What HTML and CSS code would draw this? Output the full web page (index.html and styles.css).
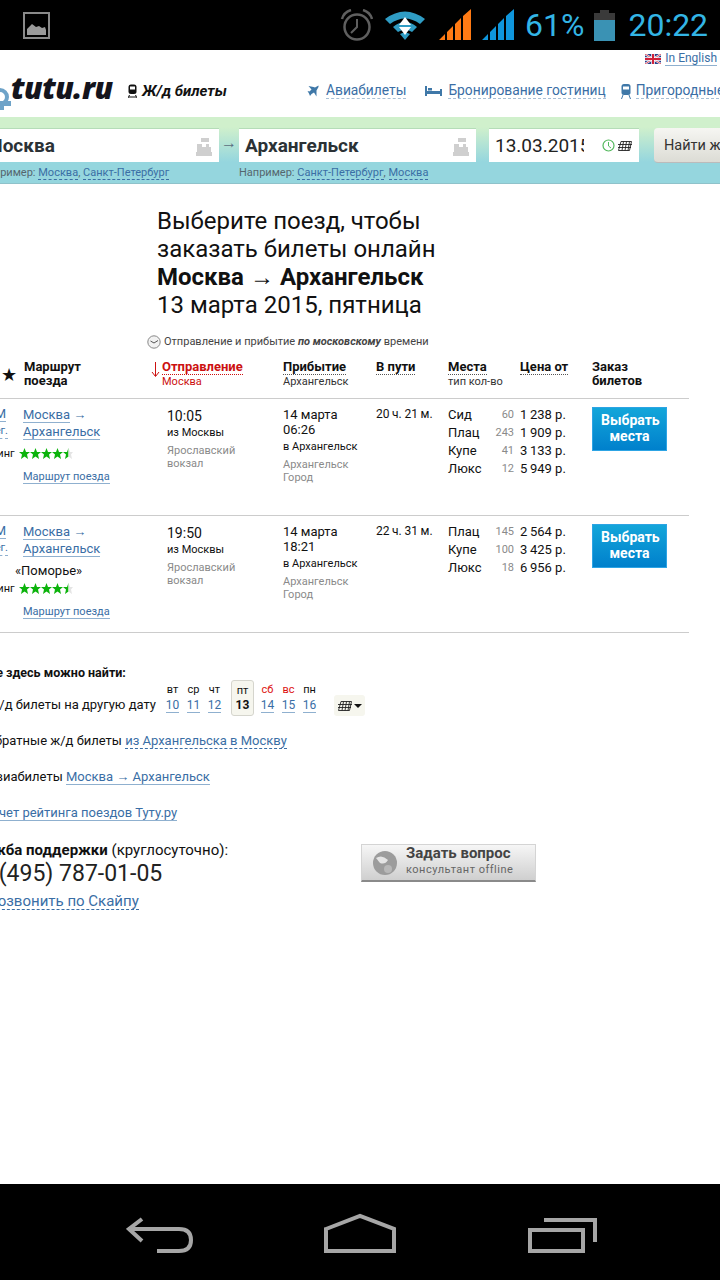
FILE: index.html
```html
<!DOCTYPE html>
<html lang="ru">
<head>
    <meta charset="UTF-8">
    <meta name="viewport" content="width=device-width, initial-scale=1.0">
    <title>Выбор поезда</title>
    <link rel="stylesheet" href="styles.css">
</head>
<body>
    <!-- Android status bar -->
    <div class="status-bar">
        <svg class="st-picture" width="27" height="27" viewBox="0 0 27 27">
            <rect x="1" y="1" width="25" height="25" fill="none" stroke="#8a8a8a" stroke-width="2"/>
            <path d="M4 23V17L9 12L13 15L16 14L19 16L22 15L23 18V23Z" fill="#9a9a9a"/>
        </svg>
        <svg class="st-alarm" width="33" height="32" viewBox="0 0 33 32">
            <circle cx="17" cy="18" r="12.5" fill="none" stroke="#5f5f5f" stroke-width="2.5"/>
            <path d="M17 10V18L11 24" fill="none" stroke="#5f5f5f" stroke-width="2"/>
            <path d="M2 10Q4 3 11 1" fill="none" stroke="#5f5f5f" stroke-width="2.5"/>
            <path d="M23 1Q30 3 32 10" fill="none" stroke="#5f5f5f" stroke-width="2.5"/>
        </svg>
        <svg class="st-wifi" width="40" height="31" viewBox="0 0 40 31">
            <path d="M0 9Q20 -6 40 9L35 14Q20 3 5 14Z" fill="#2f9cc4"/>
            <path d="M8 17Q20 7 32 17L27 22Q20 17 13 22Z" fill="#2f9cc4"/>
            <path d="M15 24Q20 21 25 24L20 30Z" fill="#2f9cc4"/>
            <path d="M20 7L26 15H14Z" fill="#fff"/>
            <path d="M20 25L26 17H14Z" fill="#fff"/>
        </svg>
        <svg class="st-signal" width="33" height="32" viewBox="0 0 33 32">
            <path d="M0 31L6 25V31ZM8 23L14 17V31H8ZM16 15L22 9V31H16ZM24 7L32 0V31H24Z" fill="#ff7a14"/>
        </svg>
        <svg class="st-signal-2" width="33" height="32" viewBox="0 0 33 32">
            <path d="M0 31L6 25V31ZM8 23L14 17V31H8ZM16 15L22 9V31H16ZM24 7L32 0V31H24Z" fill="#0f96dc"/>
        </svg>
        <span class="st-text st-percent">61%</span>
        <svg class="st-battery" width="21" height="31" viewBox="0 0 21 31">
            <path d="M6 0H15V3H21V31H0V3H6Z" fill="#3a3a3a"/>
            <rect y="10" width="21" height="21" fill="#3a92b4"/>
        </svg>
        <span class="st-text st-time">20:22</span>
    </div>

    <div class="screen">
        <div class="site">
            <div class="lang-row">
                <svg width="16" height="10" viewBox="0 0 16 10">
                    <rect width="16" height="10" fill="#27408b"/>
                    <path d="M0 0L16 10M16 0L0 10" stroke="#fff" stroke-width="2"/>
                    <path d="M0 0L16 10M16 0L0 10" stroke="#d0213a" stroke-width="0.8"/>
                    <path d="M8 0V10M0 5H16" stroke="#fff" stroke-width="3.5"/>
                    <path d="M8 0V10M0 5H16" stroke="#d0213a" stroke-width="2"/>
                </svg>
                <a class="lang-link" href="#">In English</a>
            </div>

            <div class="top-row">
                <svg class="logo-mark" width="12" height="24" viewBox="0 0 12 24">
                    <circle cx="0" cy="9" r="7" fill="none" stroke="#6ea3c8" stroke-width="4"/>
                    <path d="M0 13H11V18H0Z" fill="#6ea3c8"/>
                    <path d="M0 15H4V22H0Z" fill="#6ea3c8"/>
                </svg>
                <span class="logo">tutu.ru</span>
                <svg class="train-icon" width="9" height="14" viewBox="0 0 9 14">
                    <rect x="0.5" y="0.5" width="8" height="9.5" rx="2.5" fill="#111"/>
                    <rect x="2" y="2.5" width="5" height="3" fill="#fff"/>
                    <path d="M1.5 11L0 14M7.5 11L9 14M1 13H8" stroke="#111" fill="none"/>
                </svg>
                <span class="section-name">Ж/д билеты</span>
                <svg class="nav-plane" width="12" height="12" viewBox="0 0 12 12">
                    <path d="M11.5 0.5L8 2.5L6.5 2L1.5 1L4.5 4.5L2.5 6.5L0.5 6L2 8.5L3 11L4.5 9L7 7.5L9.5 11.5L9.5 5.5L11.5 2Z" fill="#3f78a8"/>
                </svg>
                <a class="nav-link nav-avia" href="#">Авиабилеты</a>
                <svg class="nav-bed" width="17" height="10" viewBox="0 0 17 10">
                    <path d="M0 0H2V5H15V3H17V10H15V8H2V10H0Z" fill="#3f78a8"/>
                    <rect x="3" y="2" width="4" height="2.5" fill="#3f78a8"/>
                </svg>
                <a class="nav-link nav-hotel" href="#">Бронирование гостиниц</a>
                <svg class="nav-train" width="10" height="16" viewBox="0 0 10 16">
                    <rect x="0.5" y="1" width="9" height="11" rx="2.5" fill="#3f78a8"/>
                    <rect x="2" y="3.5" width="6" height="3" fill="#fff"/>
                    <path d="M2 12L0.5 16M8 12L9.5 16" stroke="#3f78a8" fill="none"/>
                </svg>
                <a class="nav-link" href="#">Пригородные поезда</a>
            </div>

            <div class="search">
                <div class="search-fields">
                    <div class="field">
                        <span class="field-value">Москва</span>
                        <svg class="field-icon" width="16" height="18" viewBox="0 0 16 18">
                            <path d="M5 0H13V4H5ZM1 6H6V9H10V6H13V9H15V14H16V18H0V14H1Z" fill="#cfcfcf"/>
                        </svg>
                    </div>
                    <div class="field-arrow">→</div>
                    <div class="field field-to">
                        <span class="field-value">Архангельск</span>
                        <svg class="field-icon" width="16" height="18" viewBox="0 0 16 18">
                            <path d="M5 0H13V4H5ZM1 6H6V9H10V6H13V9H15V14H16V18H0V14H1Z" fill="#cfcfcf"/>
                        </svg>
                    </div>
                    <div class="field field-date">
                        <span class="date-value">13.03.2015</span>
                        <svg class="date-clock" width="13" height="13" viewBox="0 0 13 13">
                            <circle cx="6.500" cy="6.500" r="5.500" fill="none" stroke="#52b85c" stroke-width="1.2"/>
                            <path d="M6.500 3V7L9 9" fill="none" stroke="#52b85c"/>
                        </svg>
                        <svg class="date-grid" width="14" height="10" viewBox="0 0 14 10">
                            <path d="M3 .5H13.500L11.500 9.500H.5ZM0 3.500H14M0 6.500H13M5.500 .5L4 9.500M8.500 .5L7 9.500M11.500 .5L10 9.500" fill="none" stroke="#222" stroke-width="0.9"/>
                        </svg>
                    </div>
                    <button class="find-btn">Найти ж/д билеты</button>
                </div>
                <div class="hints">
                    <div class="hint">Например: <a href="#">Москва</a>, <a href="#">Санкт-Петербург</a></div>
                    <div class="hint">Например: <a href="#">Санкт-Петербург</a>, <a href="#">Москва</a></div>
                </div>
            </div>

            <div class="title">
                <h1>Выберите поезд, чтобы<br>заказать билеты онлайн<br><b>Москва → Архангельск</b><br>13 марта 2015, пятница</h1>
                <div class="tz-note">
                    <svg width="14" height="14" viewBox="0 0 14 14">
                        <circle cx="7" cy="7" r="6.200" fill="#f2f2f2" stroke="#888"/>
                        <path d="M7 8L3.500 6M7 8L11 5.500" fill="none" stroke="#555"/>
                    </svg>
                    <span>Отправление и прибытие <b><i>по московскому</i></b> времени</span>
                </div>
            </div>

            <div class="trains">
                <div class="row row-head">
                    <div class="head-route">
                        <span class="head-star">★</span>
                        <b>Маршрут<br>поезда</b>
                    </div>
                    <div class="head-depart">
                        <svg width="9" height="15" viewBox="0 0 9 15">
                            <path d="M4.500 0V14M1 10L4.500 14.500L8 10" fill="none" stroke="#cc1111"/>
                        </svg>
                        <div>
                            <b class="sort sort-red">Отправление</b>
                            <small>Москва</small>
                        </div>
                    </div>
                    <div><b class="sort">Прибытие</b><small>Архангельск</small></div>
                    <div><b class="sort">В пути</b></div>
                    <div><b class="sort">Места</b><small>тип кол-во</small></div>
                    <div><b class="sort">Цена от</b></div>
                    <div><b>Заказ<br>билетов</b></div>
                </div>

                <div class="row">
                    <div class="route">
                        <div class="route-num"><a href="#">016М</a><a class="dashed" href="#">Рег.</a></div>
                        <div class="route-links"><a href="#">Москва</a> →<br><a href="#">Архангельск</a></div>
                        <div class="rating">Рейтинг
                            <svg width="54" height="11" viewBox="0 0 54 11">
                                <path d="M5.500 0L7 4H11L8 6.500L9 11L5.500 8.500L2 11L3 6.500L0 4H4ZM16.500 0L18 4H22L19 6.500L20 11L16.500 8.500L13 11L14 6.500L11 4H15ZM27.500 0L29 4H33L30 6.500L31 11L27.500 8.500L24 11L25 6.500L22 4H26ZM38.500 0L40 4H44L41 6.500L42 11L38.500 8.500L35 11L36 6.500L33 4H37ZM49.500 0V8.500L46 11L47 6.500L44 4H48Z" fill="#0cb30c"/>
                                <path d="M49.500 0L51 4H54L52 6.500L53 11L49.500 8.500Z" fill="#e4e4e4"/>
                            </svg>
                        </div>
                        <a class="route-map" href="#">Маршрут поезда</a>
                    </div>
                    <div>
                        <div class="dep-time">10:05</div>
                        <div class="city">из Москвы</div>
                        <div class="station">Ярославский<br>вокзал</div>
                    </div>
                    <div>
                        <div class="arr-time">14 марта<br>06:26</div>
                        <div class="city city-arr">в Архангельск</div>
                        <div class="station">Архангельск<br>Город</div>
                    </div>
                    <div class="duration">20&thinsp;ч. 21&thinsp;м.</div>
                    <div class="seats">
                        <div class="seat"><span>Сид</span><span class="seat-count">60</span><span>1&thinsp;238 р.</span></div>
                        <div class="seat"><span>Плац</span><span class="seat-count">243</span><span>1&thinsp;909 р.</span></div>
                        <div class="seat"><span>Купе</span><span class="seat-count">41</span><span>3&thinsp;133 р.</span></div>
                        <div class="seat"><span>Люкс</span><span class="seat-count">12</span><span>5&thinsp;949 р.</span></div>
                    </div>
                    <div><button class="pick-btn">Выбрать места</button></div>
                </div>

                <div class="row">
                    <div class="route">
                        <div class="route-num"><a href="#">016М</a><a class="dashed" href="#">Рег.</a></div>
                        <div class="route-links"><a href="#">Москва</a> →<br><a href="#">Архангельск</a></div>
                        <div class="train-name">«Поморье»</div>
                        <div class="rating rating-named">Рейтинг
                            <svg width="54" height="11" viewBox="0 0 54 11">
                                <path d="M5.500 0L7 4H11L8 6.500L9 11L5.500 8.500L2 11L3 6.500L0 4H4ZM16.500 0L18 4H22L19 6.500L20 11L16.500 8.500L13 11L14 6.500L11 4H15ZM27.500 0L29 4H33L30 6.500L31 11L27.500 8.500L24 11L25 6.500L22 4H26ZM38.500 0L40 4H44L41 6.500L42 11L38.500 8.500L35 11L36 6.500L33 4H37ZM49.500 0V8.500L46 11L47 6.500L44 4H48Z" fill="#0cb30c"/>
                                <path d="M49.500 0L51 4H54L52 6.500L53 11L49.500 8.500Z" fill="#e4e4e4"/>
                            </svg>
                        </div>
                        <a class="route-map" href="#">Маршрут поезда</a>
                    </div>
                    <div>
                        <div class="dep-time">19:50</div>
                        <div class="city">из Москвы</div>
                        <div class="station">Ярославский<br>вокзал</div>
                    </div>
                    <div>
                        <div class="arr-time">14 марта<br>18:21</div>
                        <div class="city city-arr">в Архангельск</div>
                        <div class="station">Архангельск<br>Город</div>
                    </div>
                    <div class="duration">22&thinsp;ч. 31&thinsp;м.</div>
                    <div class="seats">
                        <div class="seat"><span>Плац</span><span class="seat-count">145</span><span>2&thinsp;564 р.</span></div>
                        <div class="seat"><span>Купе</span><span class="seat-count">100</span><span>3&thinsp;425 р.</span></div>
                        <div class="seat"><span>Люкс</span><span class="seat-count">18</span><span>6&thinsp;956 р.</span></div>
                    </div>
                    <div><button class="pick-btn">Выбрать места</button></div>
                </div>
            </div>

            <div class="more">
                <b class="more-title">Также здесь можно найти:</b>
                <div class="date-row">
                    <div class="date-label">Ж/д билеты на другую дату</div>
                    <div class="days">
                        <div class="day"><span>вт</span><a href="#">10</a></div>
                        <div class="day"><span>ср</span><a href="#">11</a></div>
                        <div class="day"><span>чт</span><a href="#">12</a></div>
                        <div class="day day-now"><span>пт</span><b>13</b></div>
                        <div class="day day-off"><span>сб</span><a href="#">14</a></div>
                        <div class="day day-off"><span>вс</span><a href="#">15</a></div>
                        <div class="day"><span>пн</span><a href="#">16</a></div>
                    </div>
                    <div class="cal-btn">
                        <svg width="14" height="10" viewBox="0 0 14 10">
                            <path d="M3 .5H13.500L11.500 9.500H.5ZM0 3.500H14M0 6.500H13M5.500 .5L4 9.500M8.500 .5L7 9.500M11.500 .5L10 9.500" fill="none" stroke="#222" stroke-width="0.9"/>
                        </svg>
                        <span class="cal-caret"></span>
                    </div>
                </div>
                <div class="more-line line-back">Обратные ж/д билеты <a class="dashed" href="#">из Архангельска в Москву</a></div>
                <div class="more-line line-avia">Авиабилеты <a href="#">Москва → Архангельск</a></div>
                <div class="more-line line-rate"><a href="#">Расчет рейтинга поездов Туту.ру</a></div>
                <div class="support">
                    <div>
                        <div class="support-title"><b>Служба поддержки</b> (круглосуточно):</div>
                        <div class="phone">+7 (495) 787-01-05</div>
                        <a class="skype dashed" href="#">Позвонить по Скайпу</a>
                    </div>
                    <div class="ask-btn">
                        <svg width="24" height="24" viewBox="0 0 24 24">
                            <circle cx="12" cy="12" r="12" fill="#9c9c9c"/>
                            <path d="M3 7Q9 3 15 9Q12 14 7 12Z" fill="#e4e4e4"/>
                            <circle cx="15" cy="18" r="4" fill="#b8b8b8"/>
                        </svg>
                        <div class="ask-text">
                            <div class="ask-title">Задать вопрос</div>
                            <div class="ask-sub">консультант offline</div>
                        </div>
                    </div>
                </div>
            </div>
        </div>
    </div>

    <!-- Android nav bar -->
    <div class="nav-bar">
        <svg width="68" height="44" viewBox="0 0 68 44">
            <path d="M16 9L3 19L16 31M3 19H53Q65 19 65 30Q65 41 53 41H31" fill="none" stroke="#a6a6a6" stroke-width="4"/>
        </svg>
        <svg width="72" height="44" viewBox="0 0 72 44">
            <path d="M2 19L36 6L70 19V41H2Z" fill="none" stroke="#a6a6a6" stroke-width="4"/>
        </svg>
        <svg width="72" height="44" viewBox="0 0 72 44">
            <rect x="4" y="20" width="53" height="21" fill="none" stroke="#a6a6a6" stroke-width="4"/>
            <path d="M18 10H69V32" fill="none" stroke="#a6a6a6" stroke-width="4"/>
        </svg>
    </div>
</body>
</html>
```

FILE: styles.css
```css
* {
    box-sizing: border-box;
}
html, body {
    margin: 0;
    padding: 0;
}
body {
    width: 720px;
    height: 1280px;
    overflow: hidden;
    display: flex;
    flex-direction: column;
    background: #fff;
    color: #111;
    font-family: Roboto, "Liberation Sans", sans-serif;
}
a {
    color: #3a6ea5;
    text-decoration: none;
    border-bottom: 1px solid #8fb0cf;
}
a.dashed {
    border-bottom: 1px dashed #3a6ea5;
}
svg {
    display: block;
    flex: none;
}

/* status bar */
.status-bar {
    height: 50px;
    flex: none;
    background: #000;
    display: flex;
    align-items: center;
}
.st-picture { margin-left: 23px; }
.st-alarm { margin-left: 290px; }
.st-wifi { margin-left: 12px; }
.st-signal { margin-left: 14px; }
.st-signal-2 { margin-left: 10px; }
.st-text {
    color: #33b5e5;
    font-size: 32px;
    line-height: 50px;
}
.st-percent { margin-left: 10px; }
.st-battery { margin-left: 10px; }
.st-time { margin-left: 13px; }

/* page */
.screen {
    flex: 1;
    overflow: hidden;
}
.site {
    width: 760px;
    margin-left: -40px;
}
.lang-row {
    height: 18px;
    display: flex;
    justify-content: flex-end;
    align-items: center;
    gap: 4px;
    padding-right: 3px;
    font-size: 12px;
}
.lang-link {
    line-height: 13px;
}
.top-row {
    height: 49px;
    padding-bottom: 4px;
    display: flex;
    align-items: center;
    white-space: nowrap;
}
.top-row > * {
    flex: none;
}
.logo-mark {
    margin: 18px 0 0 40px;
}
.logo {
    width: 115px;
    margin: -5px 0 0 -1px;
    font-family: "Open Sans", sans-serif;
    font-size: 30px;
    font-weight: 800;
    font-style: italic;
    letter-spacing: -0.6px;
    color: #14141c;
    line-height: 30px;
}
.train-icon { margin-left: 2px; }
.section-name {
    margin-left: 5px;
    width: 165px;
    font-size: 15px;
    font-weight: 700;
    font-style: italic;
}
.nav-link {
    font-size: 13.8px;
    line-height: 16px;
    border-bottom: 1px dashed #a9c0d6;
}
.nav-avia { margin-left: 7px; }
.nav-bed { margin-left: 19px; }
.nav-hotel { margin-left: 6px; }
.nav-train { margin: 0 5px 0 15px; }

/* search band */
.search {
    height: 67px;
    background: linear-gradient(#d0f0cc 0, #d0f0cc 10px, #95d6de 45px);
    border-bottom: 1px solid #8fc2ca;
    padding: 11px 0 0 20px;
}
.search-fields {
    display: flex;
    align-items: flex-start;
}
.search-fields > * {
    flex: none;
}
.field {
    width: 239px;
    height: 34px;
    background: #fff;
    border-top: 1px solid #b5dcb8;
    display: flex;
    align-items: center;
    justify-content: space-between;
    padding: 0 7px 0 6px;
    overflow: hidden;
}
.field-value {
    font-size: 19px;
    font-weight: 700;
    color: #2b3236;
}
.field-icon {
    margin-top: 2px;
}
.field-arrow {
    width: 20px;
    text-align: center;
    color: #5a6e80;
    font-size: 16px;
    line-height: 30px;
}
.field-to {
    width: 237px;
}
.field-date {
    width: 150px;
    margin-left: 13px;
    justify-content: flex-start;
}
.date-value {
    width: 92px;
    overflow: hidden;
    white-space: nowrap;
    font-size: 19px;
    color: #222;
}
.date-clock {
    margin-left: 18px;
}
.date-grid {
    margin-left: 3px;
}
.find-btn {
    margin-left: 15px;
    width: 130px;
    height: 35px;
    text-align: left;
    white-space: nowrap;
    overflow: hidden;
    padding: 0 10px;
    border: none;
    border-bottom: 1px solid #bbb;
    border-radius: 4px;
    background: linear-gradient(#f6f6f2, #dcdcd5);
    color: #333;
    font-family: inherit;
    font-size: 14.5px;
}
.hints {
    display: flex;
    margin-top: 2px;
}
.hint {
    width: 259px;
    font-size: 11px;
    line-height: 16px;
    color: #55666e;
}
.hint a {
    border-bottom: 1px dashed #3a6ea5;
}

/* title */
.title {
    padding: 23px 0 0 197px;
}
h1 {
    margin: 0;
    font-size: 24px;
    font-weight: 400;
    line-height: 28px;
    color: #111;
}
.tz-note {
    margin: 15px 0 0 -10px;
    display: flex;
    align-items: center;
    gap: 3px;
    font-size: 11px;
    line-height: 16px;
    color: #444;
}

/* trains table */
.trains {
    width: 729px;
    margin-top: 9px;
}
.row {
    display: grid;
    grid-template-columns: 207px 116px 93px 72px 144px 97px;
    height: 117px;
    padding-top: 8px;
    border-bottom: 1px solid #ccc;
}
.row-head {
    grid-template-columns: 191px 132px 93px 72px 72px 72px 97px;
    height: 40px;
    padding-top: 1px;
    font-size: 13px;
    line-height: 14px;
}
.row-head small {
    display: block;
    margin-top: 1px;
    font-size: 11px;
    line-height: 14px;
    color: #333;
}
.head-route {
    display: flex;
    padding-left: 41px;
    gap: 7px;
}
.head-star {
    font-size: 18px;
    line-height: 26px;
    margin-top: 2px;
}
.head-depart {
    display: flex;
    gap: 2px;
    color: #cc1111;
}
.head-depart svg {
    margin-top: 2px;
}
.head-depart small {
    color: #cc1111;
}
.sort {
    border-bottom: 1px dotted #555;
}
.sort-red {
    border-bottom-color: #cc1111;
}
.route {
    display: grid;
    grid-template-columns: 63px 1fr;
    align-content: start;
    margin-top: -1px;
}
.route-num {
    text-align: right;
    font-size: 13px;
    line-height: 17px;
    padding-right: 17px;
    display: flex;
    flex-direction: column;
    align-items: flex-end;
}
.route-num a {
    line-height: 15px;
    margin-bottom: 1px;
}
.route-num .dashed {
    margin-right: -2px;
    font-size: 11px;
    border-bottom-color: #8fb0cf;
}
.route-links {
    font-size: 13px;
    line-height: 17px;
    color: #3a6ea5;
}
.route-links a {
    line-height: 15px;
}
.train-name {
    grid-column: 1 / -1;
    padding-left: 55px;
    margin-top: 6px;
    font-size: 13px;
    line-height: 16px;
}
.rating {
    grid-column: 1 / -1;
    margin-top: 6px;
    padding-left: 13px;
    height: 14px;
    display: flex;
    align-items: center;
    gap: 4px;
    font-size: 11px;
}
.rating-named {
    margin-top: 2px;
}
.route-map {
    grid-column: 2;
    justify-self: start;
    margin-top: 10px;
    font-size: 11px;
    line-height: 13px;
}
.dep-time {
    font-size: 14px;
    line-height: 17px;
    padding-top: 1px;
}
.city {
    font-size: 11px;
    line-height: 14px;
    margin-top: 1px;
}
.city-arr {
    margin-top: 3px;
}
.station {
    font-size: 11px;
    line-height: 13px;
    margin-top: 4px;
    color: #8a8a8a;
}
.arr-time {
    font-size: 13px;
    line-height: 15px;
}
.duration {
    font-size: 12px;
    line-height: 15px;
}
.seats {
    font-size: 13px;
    margin-top: -1px;
}
.seat {
    display: grid;
    grid-template-columns: 40px 26px 78px;
    column-gap: 0;
    height: 18px;
    line-height: 18px;
    align-items: center;
}
.seat span:last-child {
    padding-left: 6px;
    font-size: 13px;
}
.seat-count {
    text-align: right;
    font-size: 11px;
    color: #8a8a8a;
}
.pick-btn {
    display: block;
    width: 75px;
    height: 44px;
    padding: 0 8px 2px;
    border: 1px solid #2da4e4;
    background: linear-gradient(#13a6da, #0080cc);
    color: #fff;
    font-family: inherit;
    font-size: 14px;
    font-weight: 700;
    line-height: 16px;
}

/* more links */
.more {
    padding: 32px 0 0 5px;
    font-size: 13px;
}
.more-title {
    display: block;
    font-size: 12.5px;
    line-height: 16px;
}
.date-row {
    display: flex;
    align-items: flex-end;
    margin-top: -1px;
}
.date-label {
    width: 191px;
    text-align: right;
    line-height: 16px;
    margin-bottom: 3px;
    flex: none;
}
.days {
    display: flex;
    margin-left: 6px;
    font-size: 11px;
    text-align: center;
}
.day {
    width: 21px;
    height: 36px;
    display: flex;
    flex-direction: column;
    align-items: center;
    justify-content: space-between;
    padding: 3px 0 3px;
}
.day a, .day b {
    font-size: 12px;
    line-height: 13px;
}
.day-now {
    width: 23px;
    margin-left: 6px;
    background: #f6f6ee;
    border: 1px solid #d5d5cd;
    border-radius: 3px;
}
.day-now + .day {
    margin-left: 3px;
}
.day-off span {
    color: #dd1111;
}
.cal-btn {
    width: 31px;
    height: 21px;
    margin-left: 14px;
    background: #f6f6ee;
    border-radius: 3px;
    display: flex;
    align-items: center;
    justify-content: center;
    gap: 2px;
}
.cal-caret {
    border: 4px solid transparent;
    border-top: 4px solid #111;
    border-bottom: none;
}
.more-line {
    line-height: 16px;
    white-space: nowrap;
}
.line-back {
    margin-top: 17px;
    margin-left: 21px;
}
.line-avia {
    margin-top: 20px;
    margin-left: 22px;
}
.line-rate {
    margin-top: 20px;
    margin-left: 12px;
}
.support {
    display: grid;
    grid-template-columns: 394px 175px;
    margin-top: 21px;
    padding-left: 2px;
}
.support-title {
    font-size: 15px;
    line-height: 17px;
}
.phone {
    margin-top: 2px;
    font-size: 23px;
    line-height: 26px;
    color: #222;
}
.skype {
    display: inline-block;
    margin: 6px 0 0 20px;
    font-size: 15px;
    line-height: 16px;
}
.ask-btn {
    height: 38px;
    margin-top: 2px;
    display: flex;
    align-items: center;
    gap: 9px;
    padding-left: 11px;
    border: 1px solid #d4d4d4;
    border-bottom: 2px solid #8a8a8a;
    background: linear-gradient(#f6f6f6, #cfcfcf);
}
.ask-text {
    margin-top: -3px;
}
.ask-title {
    font-size: 15px;
    font-weight: 700;
    line-height: 17px;
    color: #444;
}
.ask-sub {
    font-size: 11px;
    line-height: 15px;
    letter-spacing: 0.5px;
    color: #666;
}

/* nav bar */
.nav-bar {
    height: 96px;
    flex: none;
    background: #000;
    display: flex;
    align-items: center;
    padding-left: 126px;
    gap: 130px;
}
```
